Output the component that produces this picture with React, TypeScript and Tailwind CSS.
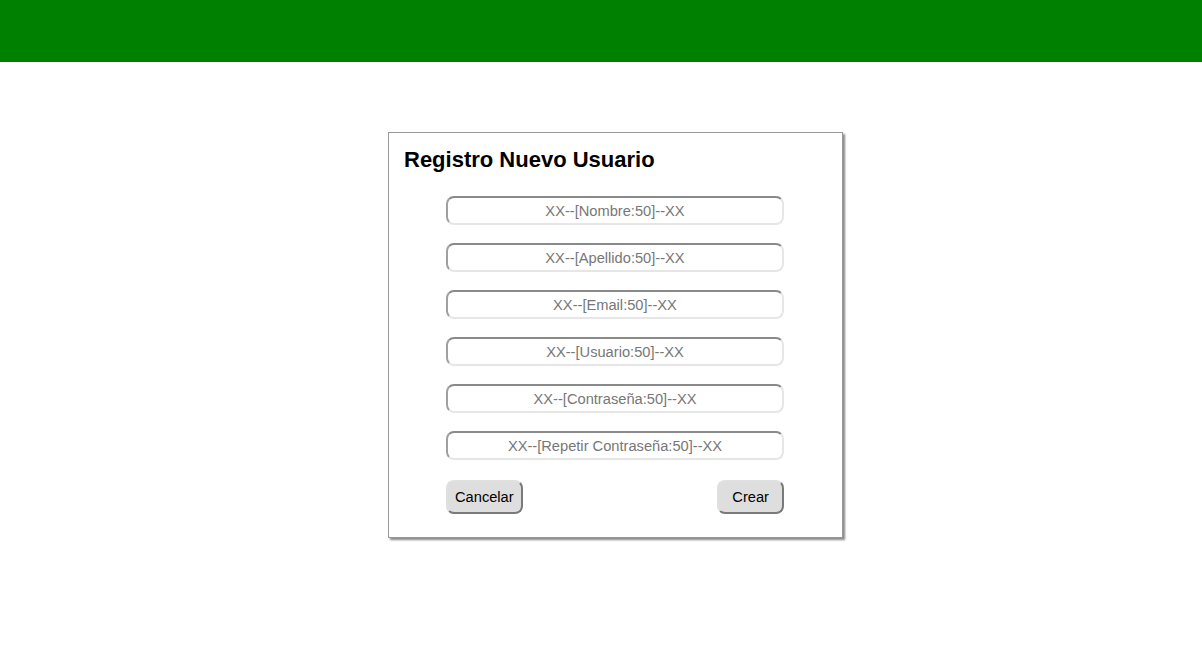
import React from "react";

const fields = [
  "XX--[Nombre:50]--XX",
  "XX--[Apellido:50]--XX",
  "XX--[Email:50]--XX",
  "XX--[Usuario:50]--XX",
  "XX--[Contraseña:50]--XX",
  "XX--[Repetir Contraseña:50]--XX",
];

const App = () => {
  return (
    <div className="min-h-screen bg-white font-['Liberation_Sans',Arial,sans-serif]">
      <div className="h-[62px] bg-[#008000]" />
      <div className="flex justify-center pt-[70px] pl-[29px]">
        <div className="w-[455px] border border-[#999] bg-white pt-[15px] pb-[23px] shadow-[2px_2px_2px_#888]">
          <h1 className="px-[15px] text-[22px] font-bold leading-[24px] text-black">Registro Nuevo Usuario</h1>
          <div className="mt-[24px] flex flex-col gap-[18px] pl-[57px]">
            {fields.map((f) => (
              <input
                key={f}
                placeholder={f}
                className="h-[29px] w-[338px] rounded-[8px] border-2 border-t-[#8a8a8a] border-l-[#a0a0a0] border-r-[#e6e6e6] border-b-[#e6e6e6] bg-white text-center text-[14.667px] outline-none placeholder:text-[#777]"
              />
            ))}
          </div>
          <div className="mt-[20px] ml-[57px] flex w-[338px] justify-between">
            <button className="h-[34px] rounded-[8px] border-2 border-t-[#e0e0e0] border-l-[#e0e0e0] border-r-[#7a7a7a] border-b-[#7a7a7a] bg-[#dedede] px-[7px] text-[14.667px] text-black">
              Cancelar
            </button>
            <button className="h-[34px] rounded-[8px] border-2 border-t-[#e0e0e0] border-l-[#e0e0e0] border-r-[#7a7a7a] border-b-[#7a7a7a] bg-[#dedede] px-[13px] text-[14.667px] text-black">
              Crear
            </button>
          </div>
        </div>
      </div>
    </div>
  );
};

export default App;
